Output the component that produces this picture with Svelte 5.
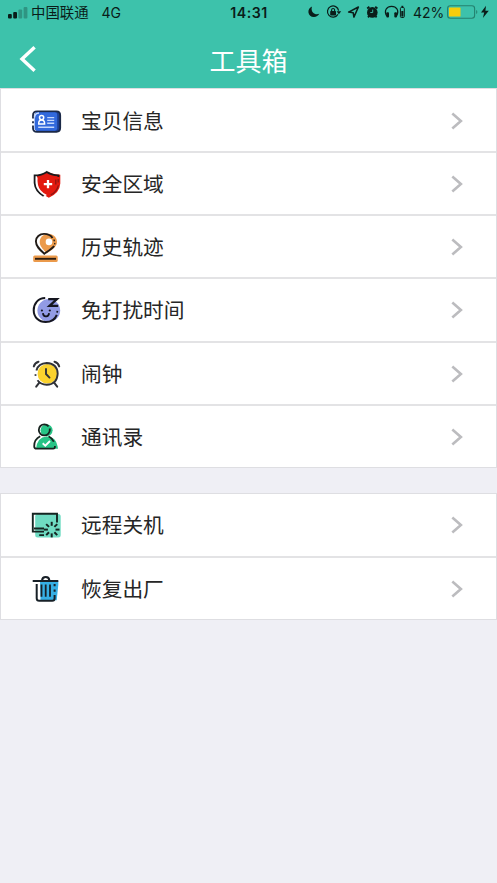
<script>
  const groups = [
    [
      { icon: "card", label: "宝贝信息" },
      { icon: "shield", label: "安全区域" },
      { icon: "track", label: "历史轨迹" },
      { icon: "sleep", label: "免打扰时间" },
      { icon: "alarm", label: "闹钟" },
      { icon: "contact", label: "通讯录" },
    ],
    [
      { icon: "shutdown", label: "远程关机" },
      { icon: "reset", label: "恢复出厂" },
    ],
  ];

  const rays = [0, 45, 90, 135, 180, 225, 270, 315];
</script>

<main>
  <header>
    <div class="status">
      <div class="carrier">
        <svg class="signal" width="20" height="12" viewBox="0 0 20 12">
          <rect x="0" y="7" width="3.8" height="4.5" rx="1" />
          <rect x="5.2" y="5" width="3.8" height="6.5" rx="1" />
          <rect x="10.4" y="2.5" width="3.8" height="9" rx="1" opacity="0.28" />
          <rect x="15.6" y="0" width="3.8" height="11.5" rx="1" opacity="0.28" />
        </svg>
        <span class="operator">中国联通</span>
        <span class="network">4G</span>
      </div>
      <span class="time">14:31</span>
      <div class="indicators">
        <svg width="106" height="16" viewBox="0 0 106 16">
          <!-- moon -->
          <path d="M5.1 2.4C2.6 3.4 1.2 5.6 1.4 8.3C1.7 11.4 4.2 13.2 7 13.1C9.4 13 11.3 11.8 12.3 9.8C9.8 10.7 7.4 10.2 5.9 8.4C4.5 6.7 4.2 4.4 5.1 2.4Z" />
          <!-- rotation lock -->
          <path d="M30.9 10.4A5.6 5.6 0 1 1 31.6 6.7" fill="none" stroke="#0a1d19" stroke-width="1.2" />
          <path d="M29.6 7.2h4.6l-2.3 3.1z" />
          <rect x="23.2" y="7.1" width="5.8" height="4.3" rx="0.6" />
          <path d="M24.6 7.3V6a1.5 1.5 0 0 1 3 0v1.3" fill="none" stroke="#0a1d19" stroke-width="1.1" />
          <!-- location -->
          <path d="M41.6 8.1L51.4 3L46.9 13.1L46.2 8.7Z" fill="none" stroke="#0a1d19" stroke-width="1.5" stroke-linejoin="round" />
          <!-- alarm -->
          <circle cx="65.3" cy="8.4" r="5.3" />
          <path d="M60.2 4.5L62.4 2.7M70.4 4.5L68.2 2.7M62 12.2l-1 1.2M68.6 12.2l1 1.2" stroke="#0a1d19" stroke-width="1.8" />
          <path d="M65.7 5.6V8.5H63.3" fill="none" stroke="#3dc2ab" stroke-width="0.9" />
          <!-- headphones -->
          <path d="M79.7 12C76.5 6.2 80 2.3 84.6 2.3S92.7 6.2 89.5 12" fill="none" stroke="#0a1d19" stroke-width="1.3" />
          <rect x="79.3" y="8.2" width="2.7" height="5.4" rx="1" />
          <rect x="87.3" y="8.2" width="2.7" height="5.4" rx="1" />
          <rect x="93.4" y="3.5" width="3.9" height="10" rx="1" fill="none" stroke="#0a1d19" stroke-width="1" />
          <rect x="94.4" y="1.8" width="1.9" height="1.3" />
          <rect x="94.3" y="7" width="2.1" height="5.6" />
        </svg>
        <span class="percent">42%</span>
        <svg class="battery" width="44" height="16" viewBox="0 0 44 16">
          <rect x="0.6" y="1.7" width="27" height="12.5" rx="2.7" fill="none" stroke="#24816f" stroke-width="1.1" />
          <rect x="2" y="3.5" width="11.5" height="9" rx="0.5" fill="#f6cd0b" />
          <path d="M29.2 6v4c1.5-.5 1.5-3.5 0-4z" fill="#24816f" />
          <path d="M39 1.8L34 8.6H37.2L35.9 14L41.8 6.8H38.4Z" />
        </svg>
      </div>
    </div>
    <div class="navbar">
      <button class="back" aria-label="返回">
        <svg width="18" height="28" viewBox="0 0 18 28">
          <path d="M15.6 2.2L3 14L15.6 25.8" fill="none" stroke="#fff" stroke-width="3.4" />
        </svg>
      </button>
      <h1>工具箱</h1>
    </div>
  </header>

  {#each groups as group}
    <ul>
      {#each group as item}
        <li>
          <svg class="icon" width="36" height="36" viewBox="0 0 36 36">
            {#if item.icon === "card"}
              <rect x="7" y="8" width="25.6" height="21" rx="4.5" fill="#1d3f93" />
              <path d="M9 8.4H28.5Q32.2 8.4 32.2 12.4V24.8Q32.2 28.8 28.5 28.8H9Q5 28.8 5 25V22.5M5 20.2V18.2M5 15.5V12.5Q5 8.4 9 8.4" fill="none" stroke="#1b2947" stroke-width="1.8" />
              <rect x="6.6" y="9.3" width="22.6" height="18.4" rx="2.4" fill="#3269dc" />
              <path d="M6.5 14.4Q6.7 10.2 11 10" fill="none" stroke="#c9dcff" stroke-width="1.5" />
              <circle cx="13.6" cy="14.6" r="2.1" fill="none" stroke="#fff" stroke-width="1.5" />
              <path d="M10.7 20.9Q10.5 17 13.6 17T16.6 20.9Z" fill="none" stroke="#fff" stroke-width="1.5" />
              <path d="M19.2 14.6h7M19.2 17.4h7M19.2 20.2h7M10.2 24.2h16" stroke="#c5d8fb" stroke-width="1.4" />
            {:else if item.icon === "shield"}
              <path d="M20.3 5.7Q24.8 8.8 32.3 8.7V17.5Q31.8 27 20.8 31.7Q10 26.8 9 17.5V9Q15.5 8.8 20.3 5.7Z" fill="#e3190f" />
              <path d="M15.6 30Q7.2 25.1 6.6 17V9.4Q13.6 9.4 18.8 5.9Q23.3 9.1 30.4 9.3V11" fill="none" stroke="#191a1c" stroke-width="1.8" />
              <path d="M8.8 11.4Q8 20 12 24.7Q14.8 28 18.3 29.4" fill="none" stroke="#fff" stroke-width="1.6" />
              <path d="M30.2 13V16.5M30.4 19.3Q28.7 25.8 22.8 28.9M27.8 13.4V18.5" fill="none" stroke="#8e1612" stroke-width="1.3" />
              <path d="M20 13.9v8.4M15.8 18.1h8.4" stroke="#fff" stroke-width="2.3" />
            {:else if item.icon === "track"}
              <path d="M20.3 4.8C25.3 4.8 29 8.6 29 13.1C29 17.2 25 20.3 18.8 24.4C14.2 19.6 11.7 16.7 11.7 13C11.7 8.5 15.4 4.8 20.3 4.8Z" fill="#eb9a4b" />
              <circle cx="21" cy="12.9" r="3.3" fill="#fff" />
              <path d="M26.1 17C24.3 19.7 19.2 22.6 16.3 24.7C12.1 21 7.9 17.5 7.9 12.3C7.9 7.8 11.6 4.9 16 4.9C20 4.9 22.9 6.3 24.5 9" fill="none" stroke="#211b17" stroke-width="1.9" />
              <path d="M25.8 10.6l.7 1.6M26.9 14l-.3 1.4" stroke="#211b17" stroke-width="1.3" />
              <rect x="5.2" y="26.5" width="24.5" height="6.4" rx="1.5" fill="#eb9a4b" />
              <path d="M7 29.8h21" stroke="#2c1c10" stroke-width="1.9" />
            {:else if item.icon === "sleep"}
              <circle cx="20.8" cy="18.5" r="11.4" fill="#929be5" />
              <path d="M17.2 6C10.2 6 5.7 11.5 5.7 18.2C5.7 25.1 10.8 30 17.7 30C22.8 30 27 27.4 28.8 22.8" fill="none" stroke="#15161f" stroke-width="2" />
              <path d="M29.1 20.7L29.4 18.8" stroke="#15161f" stroke-width="1.7" />
              <path d="M20.2 7.1h8.7L21.5 13.9h8.7" fill="none" stroke="#15161f" stroke-width="2.3" />
              <circle cx="13.9" cy="18.5" r="1.1" fill="#15161f" />
              <circle cx="21.8" cy="18.5" r="1.1" fill="#15161f" />
              <path d="M14.9 21.2Q15.3 24.5 18 24.3Q20.7 24.5 21.1 21.2" fill="none" stroke="#15161f" stroke-width="1.8" />
            {:else if item.icon === "alarm"}
              <circle cx="19.4" cy="17.7" r="9.8" fill="#fad22e" />
              <path d="M8.4 14.4Q10.4 7.3 18.7 7Q29.4 7.7 29.7 17.7Q29 28.5 18.7 28.7Q12.5 28.5 9.5 24.3" fill="none" stroke="#303237" stroke-width="1.9" />
              <path d="M7.5 18.2v1.7" stroke="#303237" stroke-width="1.8" />
              <path d="M5.8 10.4Q6.7 6.7 10.5 5.7M31.2 10.4Q30.3 6.7 26.5 5.7" fill="none" stroke="#303237" stroke-width="2" stroke-linecap="round" />
              <path d="M11.3 26.6L8.2 30.6M26.1 26.6L29.2 30.6" stroke="#303237" stroke-width="2" stroke-linecap="round" />
              <path d="M18 12.9V18L21.5 21.6" fill="none" stroke="#303237" stroke-width="1.9" stroke-linecap="round" />
            {:else if item.icon === "contact"}
              <circle cx="18.6" cy="11.2" r="6" fill="#27c486" />
              <path d="M8 29.8Q9.3 18 18.4 17.4Q28.7 17.3 30 29.8Z" fill="#27c486" />
              <circle cx="16.3" cy="10.9" r="5.5" fill="none" stroke="#17231f" stroke-width="1.8" stroke-dasharray="30 2.2" />
              <path d="M12.2 17.2Q6 20.4 6.2 27.2Q6.2 29.7 8.7 29.7H25Q27.2 29.5 26.9 27M25.8 22.8Q24.5 19.3 20.6 17.2" fill="none" stroke="#17231f" stroke-width="1.8" />
              <path d="M14.7 24.3L17.3 26.7L22 22" fill="none" stroke="#fff" stroke-width="1.9" />
            {:else if item.icon === "shutdown"}
              <rect x="7.2" y="7" width="25.5" height="23.6" rx="2.5" fill="#6fdbc2" />
              <path d="M29 15.4V6.7H4.8V24.6H16M6 21.5H16M11.2 28.1H16" fill="none" stroke="#152421" stroke-width="1.9" />
              {#each rays as angle}
                <path d="M23.7 18.8v-4" transform="rotate({angle} 23.7 22.6)" stroke="#152421" stroke-width="2" />
              {/each}
            {:else}
              <path d="M12 10H30.3V14L28.7 29.3H12.5Z" fill="#36afe4" />
              <path d="M4.7 10.1H30.3M14 9.6Q14.3 6.1 17.7 6.1T21.4 9.6" fill="none" stroke="#182027" stroke-width="2" />
              <path d="M8.7 13V27.2Q8.7 29.7 11.2 29.7H24.2Q26.6 29.7 26.6 27.2V24M26.6 20.8V18.4M26.6 15.3V13" fill="none" stroke="#182027" stroke-width="2" />
              <path d="M13.5 13.5V25.8M17.7 13.5V25.8M22 13.5V25.8" stroke="#182027" stroke-width="1.8" />
            {/if}
          </svg>
          <span class="label">{item.label}</span>
          <svg class="arrow" width="14" height="18" viewBox="0 0 14 18">
            <path d="M2.3 1.5L10.9 9L2.3 16.5" fill="none" stroke="#bcbcbf" stroke-width="2.6" />
          </svg>
        </li>
      {/each}
    </ul>
  {/each}
</main>

<style>
  :global(body) {
    background: #efeff5;
  }

  main {
    min-height: 883px;
    background: #efeff5;
    font-family: "Liberation Sans", "Noto Sans CJK SC", sans-serif;
    color: #262626;
  }

  header {
    height: 88px;
    background: #3dc2ab;
  }

  .status {
    height: 25px;
    padding: 0 8px;
    box-sizing: border-box;
    display: grid;
    grid-template-columns: 1fr auto 1fr;
    align-items: center;
    color: #0a1d19;
    fill: #0a1d19;
    font-family: Inter, "Noto Sans CJK SC", sans-serif;
    font-size: 14px;
    line-height: 25px;
    white-space: nowrap;
  }

  .carrier,
  .indicators {
    display: flex;
    align-items: center;
  }

  .operator {
    margin-left: 3px;
    font-size: 14.4px;
  }

  .network {
    margin-left: 13px;
  }

  .time {
    padding-left: 1px;
    font-size: 14.2px;
    font-weight: 600;
    letter-spacing: 0.5px;
  }

  .indicators {
    justify-content: flex-end;
    margin-right: -2px;
  }

  .indicators svg {
    margin-top: -1px;
  }

  .percent {
    width: 34px;
  }

  .navbar {
    height: 63px;
    display: grid;
    grid-template-columns: 60px 1fr 60px;
    align-items: center;
  }

  .back {
    height: 40px;
    margin: 5px 0 0;
    padding: 0 0 0 19px;
    border: 0;
    background: none;
    display: flex;
    align-items: center;
  }

  h1 {
    margin: 10px 0 0;
    color: #fff;
    font-size: 26px;
    font-weight: 400;
    line-height: 36px;
    text-align: center;
  }

  ul {
    margin: 0 0 25px;
    padding: 0;
    border: 1px solid #dedee2;
    background: #fff;
    list-style: none;
  }

  li {
    height: 63.2px;
    padding: 0 32px 0 27px;
    box-sizing: border-box;
    display: flex;
    align-items: center;
  }

  li:first-child {
    height: 62px;
  }

  li + li {
    border-top: 2px solid #e3e3e5;
  }

  .icon,
  .arrow {
    margin-top: 1px;
  }

  .label {
    flex: 1;
    margin-left: 17px;
    padding-top: 3px;
    font-size: 20.7px;
    line-height: 30px;
  }
</style>
